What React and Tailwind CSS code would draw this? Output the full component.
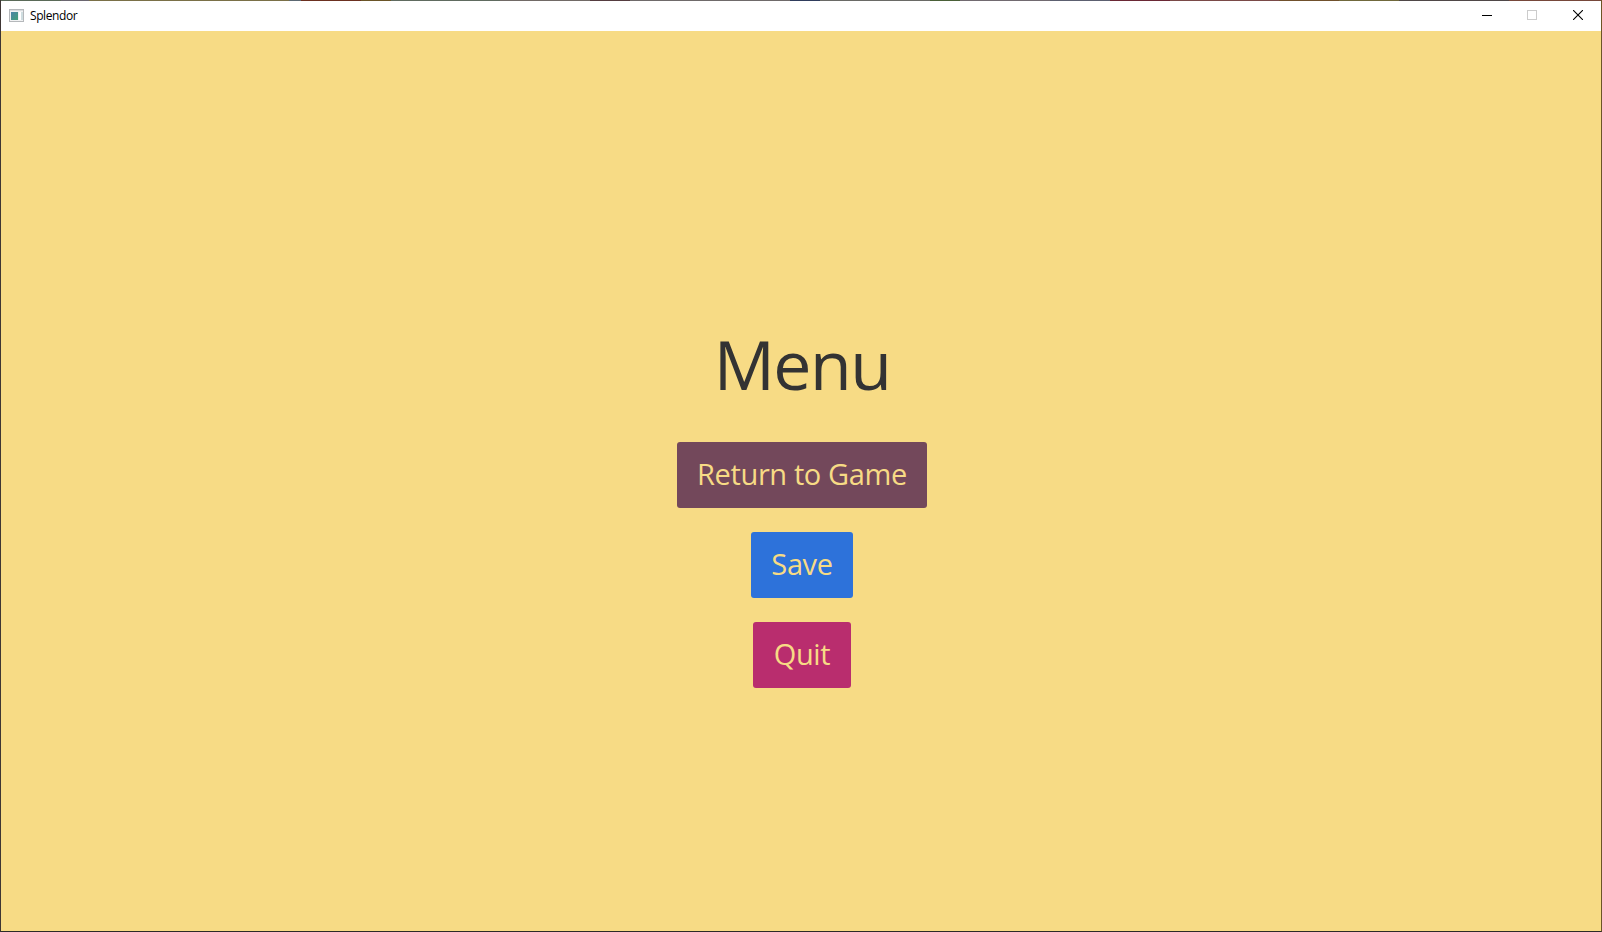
import React from 'react';

function AppIcon() {
  return (
    <svg width="16" height="14" viewBox="0 0 16 14" className="mt-[2px]">
      <defs>
        <linearGradient id="pane" x1="0" y1="0" x2="1" y2="1">
          <stop offset="0" stopColor="#4b83a8" />
          <stop offset="1" stopColor="#43a077" />
        </linearGradient>
      </defs>
      <rect x="0.5" y="0.5" width="14" height="12" fill="#f1f2f3" stroke="#b5b8bb" />
      <rect x="1" y="1" width="13" height="1" fill="#d9dcdf" />
      <rect x="2" y="3" width="7" height="8" fill="url(#pane)" />
      <rect x="10" y="3" width="2" height="8" fill="#ffffff" />
      <rect x="12" y="3" width="2" height="8" fill="#cfdde0" />
    </svg>
  );
}

function TitleBar() {
  return (
    <header className="flex h-[30px] shrink-0 items-center bg-white pb-[2px] pl-2">
      <AppIcon />
      <span className="ml-[5px] mt-[2px] text-[12px] leading-4 tracking-[-0.4px] text-black">Splendor</span>
      <div className="ml-auto flex h-full items-center">
        <button className="flex h-full w-[46px] items-center justify-center" aria-label="Minimize">
          <svg width="10" height="10" shapeRendering="crispEdges"><rect y="5" width="10" height="1" fill="#000" /></svg>
        </button>
        <button className="flex h-full w-[44px] items-center justify-center" aria-label="Maximize">
          <svg width="10" height="10" shapeRendering="crispEdges"><rect x="0.5" y="0.5" width="9" height="9" fill="none" stroke="#ccc" /></svg>
        </button>
        <button className="flex h-full w-[47px] items-center justify-center pl-px" aria-label="Close">
          <svg width="10" height="10"><path d="M0 0L10 10M10 0L0 10" stroke="#000" strokeWidth="1.1" /></svg>
        </button>
      </div>
    </header>
  );
}

// Desktop colours showing along the top edge of the window: [width, colour]
const topEdge = [
  [60, '#5a6a58'], [28, '#6b6670'], [200, '#7a7048'], [12, '#5c6872'], [60, '#6b3020'],
  [30, '#6a5528'], [110, '#606b60'], [90, '#716a66'], [40, '#553c40'], [160, '#6f6a6a'],
  [30, '#2f3c5c'], [110, '#6a6a66'], [30, '#4a6038'], [90, '#716a70'], [60, '#5c6070'],
  [60, '#6a2835'], [110, '#7a4a48'], [60, '#70502c'], [60, '#70683c'], [110, '#4f4848'],
  [92, '#76483a'],
];

export default function App() {
  return (
    <div className="flex h-[932px] w-[1602px] flex-col overflow-hidden border border-t-0 border-r-[#6d5426] border-b-[#2b2b28] border-l-[#3e3634] font-['Open_Sans','Noto_Sans',sans-serif]">
      <div className="flex h-px shrink-0">
        {topEdge.map(([width, background], i) => (
          <div key={i} className="h-px" style={{ width, background }} />
        ))}
      </div>
      <TitleBar />
      <main className="flex flex-1 flex-col items-center bg-[#f7db85] pl-[2px] pt-[286px]">
        <h1 className="h-[125px] text-[68px] leading-[94px] tracking-[-1.5px] text-[#333333]">Menu</h1>
        <div className="flex flex-col items-center gap-6 text-[29px] tracking-[-0.38px] text-[#f7db85]">
          <button className="flex h-[66px] w-[250px] items-center justify-center whitespace-nowrap rounded-[3px] bg-[#73485b] pb-[2px]">Return to Game</button>
          <button className="flex h-[66px] w-[102px] items-center justify-center rounded-[3px] bg-[#2d72da] pb-[2px]">Save</button>
          <button className="flex h-[66px] w-[98px] items-center justify-center rounded-[3px] bg-[#b92d6e] pb-[2px]">Quit</button>
        </div>
      </main>
    </div>
  );
}
